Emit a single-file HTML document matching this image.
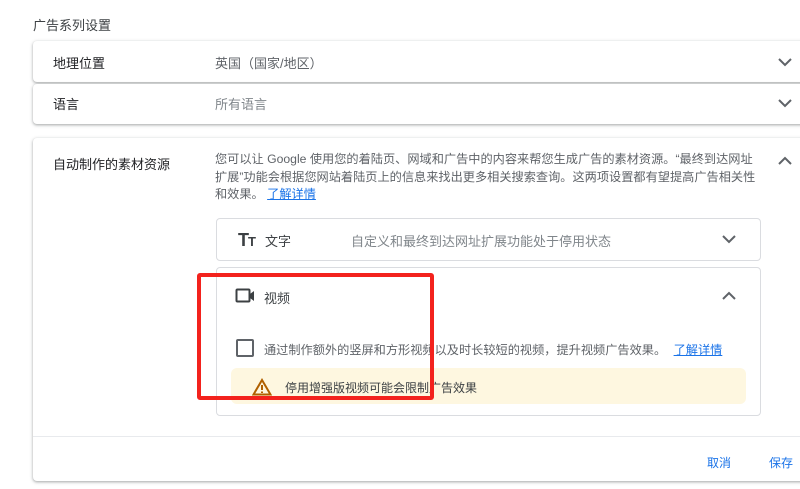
<!DOCTYPE html>
<html><head><meta charset="utf-8"><style>
body{margin:0;width:800px;height:489px;background:#fff;font-family:"Liberation Sans","Noto Sans CJK SC",sans-serif;position:relative;overflow:hidden;color:#3c4043}
.a{position:absolute}
.card{position:absolute;left:33px;width:800px;background:#fff;border-radius:4px;box-shadow:0 1px 2px rgba(60,64,67,.3),0 1px 3px 1px rgba(60,64,67,.15)}
.t{font-size:13px;position:absolute;white-space:nowrap}
.chev{position:absolute;width:16px;height:10px}
</style></head><body>
<div class="t" style="left:33px;top:15px;color:#3c4043">广告系列设置</div>
<div class="card" style="top:41px;height:41px"></div>
<div class="t" style="left:53px;top:53px;color:#202124">地理位置</div>
<div class="t" style="left:215px;top:53px;color:#5f6368">英国（国家/地区）</div>
<svg class="chev" style="left:777px;top:57px" viewBox="0 0 16 10"><path d="M2 2l6 6 6-6" fill="none" stroke="#5f6368" stroke-width="2"/></svg>
<div class="card" style="top:84px;height:40px"></div>
<div class="t" style="left:53px;top:94px;color:#202124">语言</div>
<div class="t" style="left:215px;top:94px;color:#80868b">所有语言</div>
<svg class="chev" style="left:777px;top:98px" viewBox="0 0 16 10"><path d="M2 2l6 6 6-6" fill="none" stroke="#5f6368" stroke-width="2"/></svg>
<div class="card" style="top:138px;height:343px"></div>
<div class="t" style="left:53px;top:154px;color:#202124">自动制作的素材资源</div>
<div class="a" style="left:215px;top:151px;white-space:nowrap;font-size:12.2px;line-height:17.5px;color:#5f6368">您可以让 Google 使用您的着陆页、网域和广告中的内容来帮您生成广告的素材资源。“最终到达网址<br>扩展”功能会根据您网站着陆页上的信息来找出更多相关搜索查询。这两项设置都有望提高广告相关性<br>和效果。 <span style="color:#1a73e8;text-decoration:underline">了解详情</span></div>
<svg class="chev" style="left:777px;top:156px" viewBox="0 0 16 10"><path d="M2 8l6-6 6 6" fill="none" stroke="#5f6368" stroke-width="2"/></svg>
<div class="a" style="left:216px;top:218px;width:543px;height:41px;border:1px solid #dadce0;border-radius:4px"></div>
<div class="t" style="left:238px;top:230px;font-weight:bold;font-size:18px;color:#3c4043;letter-spacing:-1px">T<span style="font-size:13px">T</span></div>
<div class="t" style="left:265px;top:231px;color:#3c4043">文字</div>
<div class="t" style="left:351px;top:231px;color:#80868b">自定义和最终到达网址扩展功能处于停用状态</div>
<svg class="chev" style="left:721px;top:234px" viewBox="0 0 16 10"><path d="M2 2l6 6 6-6" fill="none" stroke="#5f6368" stroke-width="2"/></svg>
<div class="a" style="left:216px;top:267px;width:543px;height:147px;border:1px solid #dadce0;border-radius:4px"></div>
<svg class="a" style="left:235px;top:288px" width="24" height="16" viewBox="0 0 24 16"><rect x="1.5" y="1.5" width="13" height="12" rx="1" fill="none" stroke="#3c4043" stroke-width="2"/><path d="M15 6l4-3v10l-4-3z" fill="#3c4043"/></svg>
<div class="t" style="left:264px;top:288px;color:#3c4043">视频</div>
<svg class="chev" style="left:721px;top:291px" viewBox="0 0 16 10"><path d="M2 8l6-6 6 6" fill="none" stroke="#5f6368" stroke-width="2"/></svg>
<div class="a" style="left:236px;top:339px;width:14px;height:14px;border:2px solid #5f6368;border-radius:2px"></div>
<div class="t" style="left:264px;top:340px;font-size:12.2px;color:#5f6368">通过制作额外的竖屏和方形视频以及时长较短的视频，提升视频广告效果。 <span style="color:#1a73e8;text-decoration:underline;margin-left:4px">了解详情</span></div>
<div class="a" style="left:231px;top:368px;width:515px;height:36px;background:#fef7e0;border-radius:6px"></div>
<svg class="a" style="left:252px;top:378px" width="20" height="18" viewBox="0 0 20 18"><path d="M10 2L1.5 16.5h17z" fill="none" stroke="#b06000" stroke-width="2"/><path d="M10 7v5M10 13.5v1.5" stroke="#b06000" stroke-width="2"/></svg>
<div class="t" style="left:285px;top:379px;font-size:12px;color:#3c4043">停用增强版视频可能会限制广告效果</div>
<div class="a" style="left:33px;top:436px;width:767px;height:1px;background:#e8eaed"></div>
<div class="t" style="left:707px;top:454px;font-size:12px;color:#1a73e8">取消</div>
<div class="t" style="left:769px;top:454px;font-size:12px;color:#1a73e8">保存</div>
<div class="a" style="left:197px;top:273px;width:229px;height:119px;border:4px solid #f3221d;border-radius:3px"></div>
</body></html>
